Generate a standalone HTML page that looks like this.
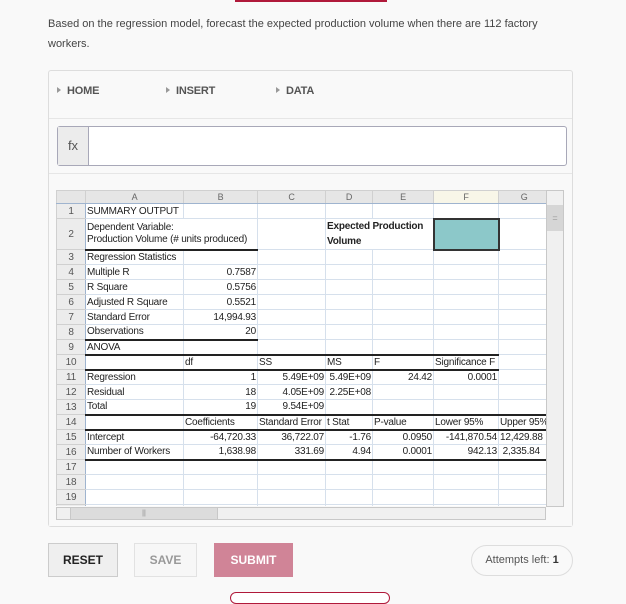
<!DOCTYPE html>
<html><head><meta charset="utf-8"><style>
*{box-sizing:border-box;margin:0;padding:0}
body{width:626px;height:596px;background:#f9f9f9;font-family:"Liberation Sans",Arial,sans-serif;position:relative;overflow:hidden;color:#333}
.abs{position:absolute}
.q{left:48px;top:14px;width:520px;font-size:11px;line-height:20px;color:#444}
.box{left:48px;top:70px;width:525px;height:457px;border:1px solid #ddd;border-radius:3px;background:#f9f9f9}
.tab{top:85px;font-size:11px;font-weight:bold;color:#555;letter-spacing:-0.2px}
.tab:before{content:"";display:inline-block;border-left:4px solid #999;border-top:3px solid transparent;border-bottom:3px solid transparent;margin-right:6px;vertical-align:1px}
.fx{left:57px;top:126px;width:510px;height:40px;border:1px solid #a8a8b8;border-radius:3px;background:#fff}
.fx span{position:absolute;left:0;top:0;width:31px;height:38px;background:#ececec;border-right:1px solid #a8a8b8;font-size:13px;color:#555;text-align:center;line-height:38px}
table{position:absolute;left:56px;top:190px;border-collapse:collapse;table-layout:fixed;background:#fff;font-size:10px;color:#222;letter-spacing:-0.2px}
td{border:1px solid #d6e0ec;height:15px;padding:0 1px;white-space:nowrap;overflow:hidden;line-height:13px}
tr.h td{height:13px;line-height:11px;background:#e6e6e6;color:#666;text-align:center;font-size:9px;border-color:#d0d0d0;border-bottom:1px solid #9fb4cf}
td.n{background:#ececec;color:#555;text-align:center;border-color:#d0d0d0;border-right:1px solid #9fb4cf}
.r{text-align:right}
.t{border-bottom:2px solid #222}
</style></head><body>
<div class="abs" style="left:235px;top:0;width:152px;height:2px;background:#b0193a"></div>
<div class="abs q">Based on the regression model, forecast the expected production volume when there are 112 factory workers.</div>
<div class="abs box"></div>
<div class="abs" style="left:49px;top:118px;width:523px;height:1px;background:#e6e6e6"></div>
<div class="abs" style="left:49px;top:173px;width:523px;height:1px;background:#e6e6e6"></div>
<div class="abs tab" style="left:57px">HOME</div>
<div class="abs tab" style="left:166px">INSERT</div>
<div class="abs tab" style="left:276px">DATA</div>
<div class="abs fx"><span>fx</span></div>
<table>
<colgroup><col style="width:29px"><col style="width:98px"><col style="width:74px"><col style="width:68px"><col style="width:47px"><col style="width:61px"><col style="width:65px"><col style="width:47px"></colgroup>
<tr class="h"><td></td><td>A</td><td>B</td><td>C</td><td>D</td><td>E</td><td style="background:#f8f6e8">F</td><td>G</td></tr>
<tr><td class="n">1</td><td>SUMMARY OUTPUT</td><td></td><td></td><td></td><td></td><td></td><td></td></tr>
<tr><td class="n" style="height:30px">2</td><td colspan="2" class="t" style="line-height:12px">Dependent Variable:<br>Production Volume (# units produced)</td><td></td><td colspan="2" style="font-weight:bold;line-height:15px;overflow:visible">Expected Production<br>Volume</td><td style="background:#8cc8c9;border:2px solid #333"></td><td></td></tr>
<tr><td class="n">3</td><td>Regression Statistics</td><td></td><td></td><td></td><td></td><td></td><td></td></tr>
<tr><td class="n">4</td><td>Multiple R</td><td class="r">0.7587</td><td></td><td></td><td></td><td></td><td></td></tr>
<tr><td class="n">5</td><td>R Square</td><td class="r">0.5756</td><td></td><td></td><td></td><td></td><td></td></tr>
<tr><td class="n">6</td><td>Adjusted R Square</td><td class="r">0.5521</td><td></td><td></td><td></td><td></td><td></td></tr>
<tr><td class="n">7</td><td>Standard Error</td><td class="r">14,994.93</td><td></td><td></td><td></td><td></td><td></td></tr>
<tr><td class="n">8</td><td class="t">Observations</td><td class="r t">20</td><td></td><td></td><td></td><td></td><td></td></tr>
<tr><td class="n">9</td><td class="t">ANOVA</td><td class="t"></td><td class="t"></td><td class="t"></td><td class="t"></td><td class="t"></td><td></td></tr>
<tr><td class="n">10</td><td class="t"></td><td class="t">df</td><td class="t">SS</td><td class="t">MS</td><td class="t">F</td><td class="t">Significance F</td><td></td></tr>
<tr><td class="n">11</td><td>Regression</td><td class="r">1</td><td class="r">5.49E+09</td><td class="r">5.49E+09</td><td class="r">24.42</td><td class="r">0.0001</td><td></td></tr>
<tr><td class="n">12</td><td>Residual</td><td class="r">18</td><td class="r">4.05E+09</td><td class="r">2.25E+08</td><td></td><td></td><td></td></tr>
<tr><td class="n">13</td><td class="t">Total</td><td class="r t">19</td><td class="r t">9.54E+09</td><td class="t"></td><td class="t"></td><td class="t"></td><td class="t"></td></tr>
<tr><td class="n">14</td><td class="t"></td><td class="t">Coefficients</td><td class="t">Standard Error</td><td class="t">t Stat</td><td class="t">P-value</td><td class="t">Lower 95%</td><td class="t">Upper 95%</td></tr>
<tr><td class="n">15</td><td>Intercept</td><td class="r">-64,720.33</td><td class="r">36,722.07</td><td class="r">-1.76</td><td class="r">0.0950</td><td class="r">-141,870.54</td><td>12,429.88</td></tr>
<tr><td class="n">16</td><td class="t">Number of Workers</td><td class="r t">1,638.98</td><td class="r t">331.69</td><td class="r t">4.94</td><td class="r t">0.0001</td><td class="r t">942.13</td><td class="t">&nbsp;2,335.84</td></tr>
<tr><td class="n">17</td><td></td><td></td><td></td><td></td><td></td><td></td><td></td></tr>
<tr><td class="n">18</td><td></td><td></td><td></td><td></td><td></td><td></td><td></td></tr>
<tr><td class="n">19</td><td></td><td></td><td></td><td></td><td></td><td></td><td></td></tr>
<tr><td class="n">20</td><td></td><td></td><td></td><td></td><td></td><td></td><td></td></tr>
</table>
<div class="abs" style="left:49px;top:506px;width:523px;height:20px;background:#f9f9f9"></div>
<div class="abs" style="left:56px;top:507px;width:490px;height:13px;background:#f0f0f0;border:1px solid #c8c8c8"></div>
<div class="abs" style="left:70px;top:508px;width:148px;height:11px;background:#dcdcdc;border-right:1px solid #c8c8c8;border-left:1px solid #c8c8c8;font-size:7px;color:#888;text-align:center;line-height:11px">||</div>
<div class="abs" style="left:546px;top:190px;width:18px;height:317px;background:#f0f0f0;border:1px solid #c8c8c8"></div>
<div class="abs" style="left:547px;top:205px;width:16px;height:26px;background:#d6d6d6;font-size:9px;color:#999;text-align:center;line-height:26px">=</div>
<div class="abs" style="left:48px;top:543px;width:70px;height:34px;border:1px solid #ccc;background:#efefef;font-size:12px;font-weight:bold;color:#222;text-align:center;line-height:32px">RESET</div>
<div class="abs" style="left:134px;top:543px;width:63px;height:34px;border:1px solid #e2e2e2;background:#f7f7f7;font-size:12px;font-weight:bold;color:#999;text-align:center;line-height:32px">SAVE</div>
<div class="abs" style="left:214px;top:543px;width:79px;height:34px;background:#d08497;font-size:12px;font-weight:bold;color:#fff;text-align:center;line-height:34px">SUBMIT</div>
<div class="abs" style="left:471px;top:545px;width:102px;height:31px;border:1px solid #ddd;border-radius:16px;font-size:11px;color:#555;text-align:center;line-height:29px">Attempts left: <b style="color:#333">1</b></div>
<div class="abs" style="left:230px;top:592px;width:160px;height:12px;border:1px solid #b0193a;border-radius:6px;background:#fff"></div>
</body></html>
